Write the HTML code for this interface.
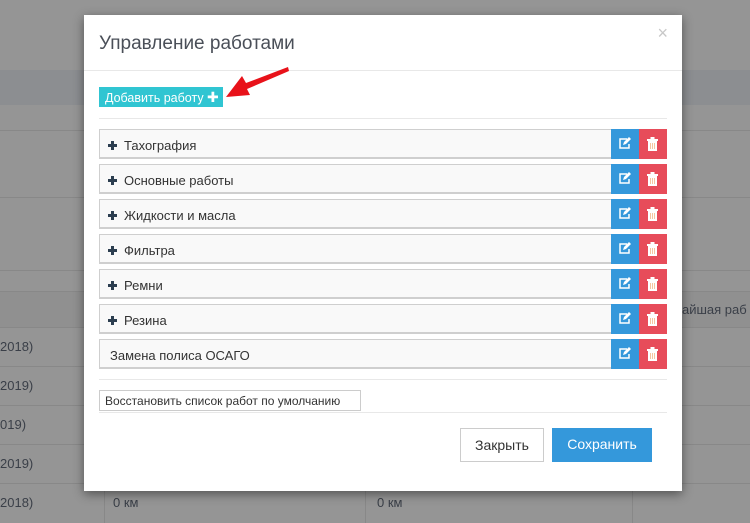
<!DOCTYPE html>
<html style="background:#959595"><head><meta charset="utf-8"><style>
*{box-sizing:border-box;margin:0;padding:0}
body{width:750px;height:520px;overflow:hidden;background:#959595;font-family:"Liberation Sans","DejaVu Sans",sans-serif;position:relative}
.hl{position:absolute;left:0;width:750px;height:1px;background:#888}
.vl{position:absolute;width:1px;background:#888}
.bt{position:absolute;color:#3a3f48;font-size:13px}
.modal{position:absolute;left:84px;top:15px;width:598px;height:476px;background:#fff;box-shadow:0 3px 10px rgba(0,0,0,.45)}
.title{position:absolute;left:15px;top:18px;font-size:19px;color:#4a4f58}
.x{position:absolute;right:14px;top:8px;font-size:18px;color:#c8c8c8}
.sep{position:absolute;left:15px;width:568px;height:1px;background:#e8e8e8}
.add{position:absolute;left:15px;top:72px;width:124px;height:20px;background:#30c5d2;color:#fff;font-size:12.5px;line-height:20px;padding-left:6px}
.row{position:absolute;left:15px;width:568px;height:30px;border:1px solid #cfcfcf;border-bottom:2px solid #cfcfcf;background:#f9f9f9;font-size:13px;color:#333;line-height:31px}
.row .p{position:absolute;left:8px;top:11px}
.row .t{position:absolute;left:24px}
.e,.d{position:absolute;top:-1px;width:28px;height:30px}
.e{right:27px;background:#3498db}.d{right:-1px;background:#e74c5a}
.e svg,.d svg{position:absolute;left:7px;top:8px}
.restore{position:absolute;left:15px;top:375px;width:262px;height:21px;border:1px solid #ccc;font-size:12px;line-height:20px;padding-left:5px;color:#333}
.btn{position:absolute;top:413px;height:34px;font-size:14px;line-height:32px;text-align:center}
</style></head><body>
<div style="position:absolute;left:0;top:70px;width:750px;height:35px;background:#8c8e91"></div>
<div class="hl" style="top:130px"></div><div class="hl" style="top:197px"></div><div class="hl" style="top:270px"></div>
<div style="position:absolute;left:0;top:291px;width:750px;height:36px;background:#909090"></div>
<div class="hl" style="top:291px"></div><div class="hl" style="top:327px"></div><div class="hl" style="top:366px"></div><div class="hl" style="top:405px"></div><div class="hl" style="top:444px"></div><div class="hl" style="top:483px"></div>
<div class="vl" style="left:104px;top:483px;height:40px"></div><div class="vl" style="left:365px;top:483px;height:40px"></div><div class="vl" style="left:632px;top:483px;height:40px"></div>
<div class="bt" style="left:0;top:339px">2018)</div>
<div class="bt" style="left:0;top:378px">2019)</div>
<div class="bt" style="left:0;top:417px">019)</div>
<div class="bt" style="left:0;top:456px">2019)</div>
<div class="bt" style="left:0;top:495px">2018)</div>
<div class="bt" style="left:113px;top:495px">0 км</div>
<div class="bt" style="left:377px;top:495px">0 км</div>
<div class="bt" style="left:682px;top:302px">айшая раб</div>
<div class="modal">
<div class="title">Управление работами</div>
<div class="x">×</div>
<div class="sep" style="left:0;width:598px;top:55px"></div>
<div class="add">Добавить работу <b style="font-size:14px">✚</b></div>
<div class="sep" style="top:103px"></div>
<div class="row" style="top:114px"><svg class="p" width="9" height="9"><path d="M3 0h3v3h3v3H6v3H3V6H0V3h3z" fill="#2c3e50"/></svg><span class="t">Тахография</span><div class="e"><svg width="14" height="13" viewBox="0 0 14 13"><path d="M9 2H2v9h9V7" fill="none" stroke="#fff" stroke-width="1.5"/><path d="M5 8l1-3 5-5 2 2-5 5z" fill="#fff"/></svg></div><div class="d"><svg width="13" height="14" viewBox="0 0 13 14"><path d="M1 2h11v2H1zM4.5 0h4v2h-4zM2 4h9v10H2z" fill="#fff"/><path d="M4.5 6v6M6.5 6v6M8.5 6v6" stroke="#f5c6a0" stroke-width="1"/></svg></div></div>
<div class="row" style="top:149px"><svg class="p" width="9" height="9"><path d="M3 0h3v3h3v3H6v3H3V6H0V3h3z" fill="#2c3e50"/></svg><span class="t">Основные работы</span><div class="e"><svg width="14" height="13" viewBox="0 0 14 13"><path d="M9 2H2v9h9V7" fill="none" stroke="#fff" stroke-width="1.5"/><path d="M5 8l1-3 5-5 2 2-5 5z" fill="#fff"/></svg></div><div class="d"><svg width="13" height="14" viewBox="0 0 13 14"><path d="M1 2h11v2H1zM4.5 0h4v2h-4zM2 4h9v10H2z" fill="#fff"/><path d="M4.5 6v6M6.5 6v6M8.5 6v6" stroke="#f5c6a0" stroke-width="1"/></svg></div></div>
<div class="row" style="top:184px"><svg class="p" width="9" height="9"><path d="M3 0h3v3h3v3H6v3H3V6H0V3h3z" fill="#2c3e50"/></svg><span class="t">Жидкости и масла</span><div class="e"><svg width="14" height="13" viewBox="0 0 14 13"><path d="M9 2H2v9h9V7" fill="none" stroke="#fff" stroke-width="1.5"/><path d="M5 8l1-3 5-5 2 2-5 5z" fill="#fff"/></svg></div><div class="d"><svg width="13" height="14" viewBox="0 0 13 14"><path d="M1 2h11v2H1zM4.5 0h4v2h-4zM2 4h9v10H2z" fill="#fff"/><path d="M4.5 6v6M6.5 6v6M8.5 6v6" stroke="#f5c6a0" stroke-width="1"/></svg></div></div>
<div class="row" style="top:219px"><svg class="p" width="9" height="9"><path d="M3 0h3v3h3v3H6v3H3V6H0V3h3z" fill="#2c3e50"/></svg><span class="t">Фильтра</span><div class="e"><svg width="14" height="13" viewBox="0 0 14 13"><path d="M9 2H2v9h9V7" fill="none" stroke="#fff" stroke-width="1.5"/><path d="M5 8l1-3 5-5 2 2-5 5z" fill="#fff"/></svg></div><div class="d"><svg width="13" height="14" viewBox="0 0 13 14"><path d="M1 2h11v2H1zM4.5 0h4v2h-4zM2 4h9v10H2z" fill="#fff"/><path d="M4.5 6v6M6.5 6v6M8.5 6v6" stroke="#f5c6a0" stroke-width="1"/></svg></div></div>
<div class="row" style="top:254px"><svg class="p" width="9" height="9"><path d="M3 0h3v3h3v3H6v3H3V6H0V3h3z" fill="#2c3e50"/></svg><span class="t">Ремни</span><div class="e"><svg width="14" height="13" viewBox="0 0 14 13"><path d="M9 2H2v9h9V7" fill="none" stroke="#fff" stroke-width="1.5"/><path d="M5 8l1-3 5-5 2 2-5 5z" fill="#fff"/></svg></div><div class="d"><svg width="13" height="14" viewBox="0 0 13 14"><path d="M1 2h11v2H1zM4.5 0h4v2h-4zM2 4h9v10H2z" fill="#fff"/><path d="M4.5 6v6M6.5 6v6M8.5 6v6" stroke="#f5c6a0" stroke-width="1"/></svg></div></div>
<div class="row" style="top:289px"><svg class="p" width="9" height="9"><path d="M3 0h3v3h3v3H6v3H3V6H0V3h3z" fill="#2c3e50"/></svg><span class="t">Резина</span><div class="e"><svg width="14" height="13" viewBox="0 0 14 13"><path d="M9 2H2v9h9V7" fill="none" stroke="#fff" stroke-width="1.5"/><path d="M5 8l1-3 5-5 2 2-5 5z" fill="#fff"/></svg></div><div class="d"><svg width="13" height="14" viewBox="0 0 13 14"><path d="M1 2h11v2H1zM4.5 0h4v2h-4zM2 4h9v10H2z" fill="#fff"/><path d="M4.5 6v6M6.5 6v6M8.5 6v6" stroke="#f5c6a0" stroke-width="1"/></svg></div></div>
<div class="row" style="top:324px"><span class="t" style="left:10px">Замена полиса ОСАГО</span><div class="e"><svg width="14" height="13" viewBox="0 0 14 13"><path d="M9 2H2v9h9V7" fill="none" stroke="#fff" stroke-width="1.5"/><path d="M5 8l1-3 5-5 2 2-5 5z" fill="#fff"/></svg></div><div class="d"><svg width="13" height="14" viewBox="0 0 13 14"><path d="M1 2h11v2H1zM4.5 0h4v2h-4zM2 4h9v10H2z" fill="#fff"/><path d="M4.5 6v6M6.5 6v6M8.5 6v6" stroke="#f5c6a0" stroke-width="1"/></svg></div></div>
<div class="sep" style="top:364px"></div>
<div class="restore">Восстановить список работ по умолчанию</div>
<div class="sep" style="top:397px"></div>
<div class="btn" style="left:376px;width:84px;border:1px solid #ccc;color:#333">Закрыть</div>
<div class="btn" style="left:468px;width:100px;background:#3498db;color:#fff">Сохранить</div>
<svg style="position:absolute;left:140px;top:52px" width="66" height="36" viewBox="0 0 66 36"><path d="M64 0L22 16 18 9 2 30 26 28 23 22 65 4z" fill="#e8121a"/></svg>
</div>
</body></html>
